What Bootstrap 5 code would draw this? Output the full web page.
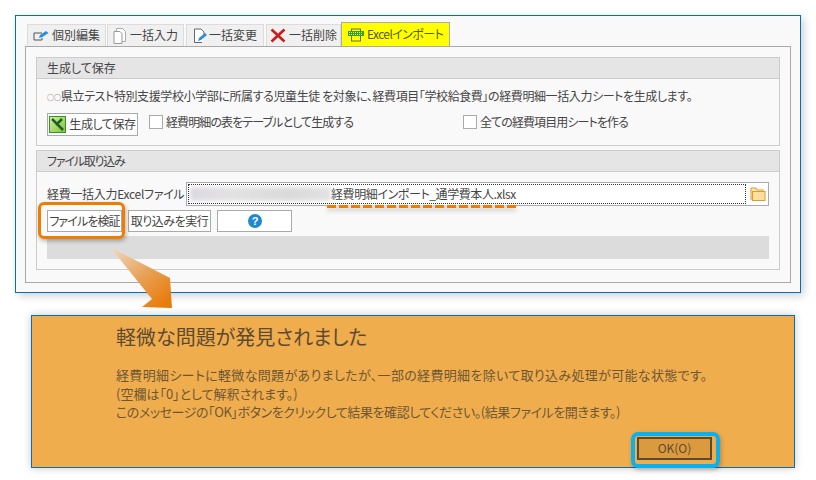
<!DOCTYPE html>
<html lang="ja"><head><meta charset="utf-8">
<link href="https://cdn.jsdelivr.net/npm/bootstrap@5.3.0/dist/css/bootstrap.min.css" rel="stylesheet">
<style>
html,body{margin:0;height:480px;overflow:hidden;background:#fff}
body{font-family:"Noto Sans CJK JP","Liberation Sans",sans-serif;font-size:12px;color:#444;position:relative;line-height:1.2;font-feature-settings:"palt"}
.stage{padding:15px 15px 0 15px;}
.win{width:786px;height:278px;border:1px solid #0070c0;background:#f9f9f9;padding:8px 9px 9px 9px;box-shadow:3px 3px 8px rgba(0,0,0,.18)}
.tabs{height:22px;margin-left:2px;border:0;flex-wrap:nowrap}
.tabx{height:22px;background:#f0f0f0;border:1px solid #dcdcdc;border-bottom:0;display:flex;align-items:center;justify-content:center;gap:3px;color:#444;white-space:nowrap;font-size:12px}
.t1{width:79px;margin-right:1px}.t2{width:77px;margin-right:2px}.t3{width:78px;margin-right:2px;gap:2px}.t4{width:75px}
.tabx.on{width:109px;background:#ff0;border:1px solid #aaa;border-bottom:0;color:#5a5a00;height:24px;margin-top:-2px;letter-spacing:-.6px}
.panel{height:237px;border:1px solid #aaa;padding:10px}
.grp{border:1px solid #ccc;width:744px}
.g1{height:89px}.g2{height:120px;margin-top:4px}
.grp>.hd{height:21px;background:#e5e5e5;border-bottom:1px solid #ccc;padding-left:10px;display:flex;align-items:center}
.g2>.hd{letter-spacing:-1.2px}
.msg{margin:10px 0 0 10px;height:17px;white-space:nowrap;font-size:12px;letter-spacing:-.4px}
.oo{font-size:7px;vertical-align:1px;letter-spacing:0}.oo1{color:#a33}.oo2{color:#446}
.acts{margin:7px 0 0 10px;height:23px;align-items:center}
.bt{border:1px solid #aaa;background:#fff;color:#444;height:22px;padding:0;border-radius:0;font-size:12px;font-feature-settings:"palt";letter-spacing:-.4px;display:flex;align-items:center;justify-content:center;gap:3px;white-space:nowrap}
.bgen{width:91px;height:23px}.bchk{width:75px;letter-spacing:-.9px}.brun{width:83px;letter-spacing:-.5px}.bhelp{width:75px}
.ck{display:flex;align-items:center;gap:3px;white-space:nowrap;letter-spacing:-.9px;align-self:flex-start;margin-top:2px}
.ck i{display:block;width:14px;height:14px;border:1px solid #aaa;background:#fff}
.ck1{margin-left:11px;width:314px}
.frow{margin:10px 0 0 10px;height:24px;width:722px;align-items:center}
.flabel{width:139px;white-space:nowrap;letter-spacing:-.3px}
.finput{width:583px;height:24px;border:1px solid #aaa;background:#fff;padding:1px 22px 1px 1px;position:relative;display:flex}
.finner{flex:1;border:1px dotted #333;display:flex;align-items:center;overflow:hidden;letter-spacing:-.4px}
.blurred{width:141px;height:14px;background:linear-gradient(90deg,#dcd9e2 0,#e2e2e2 30%,#dadada 70%,#e2e2e2 100%);filter:blur(2px);margin-left:1px}
.folder{position:absolute;right:2px;top:3px}
.brow{margin:4px 0 0 10px;gap:6px;height:22px}
.bar{margin:4px 0 0 10px;height:23px;width:722px;background:#dcdcdc}
.alertx{position:absolute;left:31px;top:315px;width:764px;height:153px;background:#f0ad4e;border:1px solid #0070c0;padding:7px 0 0 84px;color:#6a5435;box-shadow:0 0 8px rgba(0,0,0,.22)}
.alertx h1{font-size:20px;font-weight:400;margin:0;line-height:28px;color:#5d4a30;white-space:nowrap}
.alertx p{margin:15px 0 0 0;font-size:13px;line-height:18.7px;white-space:nowrap;color:#6e5733}
.l1{letter-spacing:.33px}.l3{letter-spacing:-.43px}
.okb{position:absolute;left:605px;top:121px;width:75px;height:23px;border:2px solid #5b4a33;background:#dc9a3e;display:flex;align-items:center;justify-content:center;color:#5d4a30;font-size:12px}
.hl1{position:absolute;left:38px;top:202px;width:87px;height:37px;border:3px solid #f07c00;border-radius:6px;box-shadow:1px 2px 4px rgba(0,0,0,.3)}
.hl2{position:absolute;left:631px;top:432px;width:89px;height:36px;border:4px solid #0db0ea;border-radius:7px;box-shadow:1px 2px 4px rgba(0,0,0,.25)}
.dash{position:absolute;left:327px;top:205px;width:189px;height:3px;background:repeating-linear-gradient(90deg,#f07c00 0 9px,#ddd 9px 12px);box-shadow:0 3px 4px rgba(0,0,0,.18)}
.arrow{position:absolute;left:105px;top:244px}
</style></head><body>
<div class="stage">
 <div class="win">
  <div class="nav tabs d-flex">
   <div class="tabx t1"><svg width="16" height="12" viewBox="0 0 16 12"><path d="M1 3h8M1 3v7h8V8" fill="none" stroke="#555"/><path d="M6 8l1-3 6-4 2.500 2-6 4z" fill="#2a8fd6"/></svg>個別編集</div>
   <div class="tabx t2"><svg width="14" height="16" viewBox="0 0 14 16"><path d="M3.500 .5h6l3 3v10h-9z" fill="#fff" stroke="#aaa"/><path d="M1 3.500h6l2 2v10H1z" fill="#fff" stroke="#999"/></svg>一括入力</div>
   <div class="tabx t3"><svg width="14" height="16" viewBox="0 0 14 16"><path d="M9 14.500H1.500V1H8l3 3v3" fill="#fff" stroke="#666"/><path d="M5 13l1-3 6-5 2 2-6 5z" fill="#2a8fd6"/></svg>一括変更</div>
   <div class="tabx t4"><svg width="16" height="15" viewBox="0 0 16 15"><path d="M1.500 1.500l13 12M14.500 1.500l-13 12" stroke="#d01818" stroke-width="2.600"/></svg>一括削除</div>
   <div class="tabx on"><svg width="16" height="14" viewBox="0 0 16 14"><rect x="3.500" y="1" width="9" height="12" fill="none" stroke="#666"/><rect y="3" width="16" height="5" fill="#3aa012"/><path d="M1 4.500h14M1 6.500h14" stroke="#cde8b8" stroke-dasharray="1 1"/></svg>Excelインポート</div>
  </div>
  <div class="panel">
   <div class="grp g1">
    <div class="hd">生成して保存</div>
    <div class="msg"><span class="oo oo1">○</span><span class="oo oo2">○</span>県立テスト特別支援学校小学部に所属する児童生徒 を対象に、経費項目「学校給食費」の経費明細一括入力シートを生成します。</div>
    <div class="acts d-flex">
     <button class="bt bgen"><svg width="17" height="17" viewBox="0 0 17 17"><defs><linearGradient id="x" x1="0" y1="0" x2="1" y2="1"><stop offset="0" stop-color="#d6efa8"/><stop offset="1" stop-color="#7cc238"/></linearGradient></defs><rect x=".5" y=".5" width="16" height="16" fill="url(#x)" stroke="#2e9a1c"/><path d="M3 3l11 11M13 3L7 9" stroke="#1f5f20" stroke-width="2.500"/></svg>生成して保存</button>
     <div class="ck ck1"><i></i>経費明細の表をテーブルとして生成する</div>
     <div class="ck"><i></i>全ての経費項目用シートを作る</div>
    </div>
   </div>
   <div class="grp g2">
    <div class="hd">ファイル取り込み</div>
    <div class="frow d-flex">
     <div class="flabel">経費一括入力Excelファイル</div>
     <div class="finput"><div class="finner"><div class="blurred"></div><span>経費明細インポート_通学費本人.xlsx</span></div>
      <svg class="folder" width="16" height="16" viewBox="0 0 16 16"><path d="M1 14V2h5l1 2h7" fill="#ffe9b8" stroke="#e39a2c"/><rect x="2.500" y="5.500" width="12.500" height="9" fill="#ffdf9e" stroke="#e39a2c"/></svg>
     </div>
    </div>
    <div class="brow d-flex">
     <button class="bt bchk">ファイルを検証</button>
     <button class="bt brun">取り込みを実行</button>
     <button class="bt bhelp"><svg width="14" height="14" viewBox="0 0 14 14"><circle cx="7" cy="7" r="7" fill="#1e88d0"/><text x="7" y="11" font-size="11" font-weight="700" text-anchor="middle" fill="#fff" font-family="Liberation Sans">?</text></svg></button>
    </div>
    <div class="bar"></div>
   </div>
  </div>
 </div>
</div>
<svg class="arrow" width="75" height="70" viewBox="0 0 75 70"><defs><linearGradient id="g" x1="0" y1="0" x2=".8" y2="1"><stop offset="0" stop-color="#f0dcc8"/><stop offset=".55" stop-color="#e8a055"/><stop offset="1" stop-color="#e87c0a"/></linearGradient></defs><path d="M5 3L65 34l2 30-30-1 10-8z" fill="url(#g)"/></svg>
<div class="alertx">
 <h1>軽微な問題が発見されました</h1>
 <p><span class="l1">経費明細シートに軽微な問題がありましたが、一部の経費明細を除いて取り込み処理が可能な状態です。</span><br>(空欄は「0」として解釈されます。)<br><span class="l3">このメッセージの「OK」ボタンをクリックして結果を確認してください。(結果ファイルを開きます。)</span></p>
 <div class="okb">OK(O)</div>
</div>
<div class="hl1"></div><div class="dash"></div><div class="hl2"></div>
<script src="https://cdn.jsdelivr.net/npm/bootstrap@5.3.0/dist/js/bootstrap.bundle.min.js"></script>
</body></html>
